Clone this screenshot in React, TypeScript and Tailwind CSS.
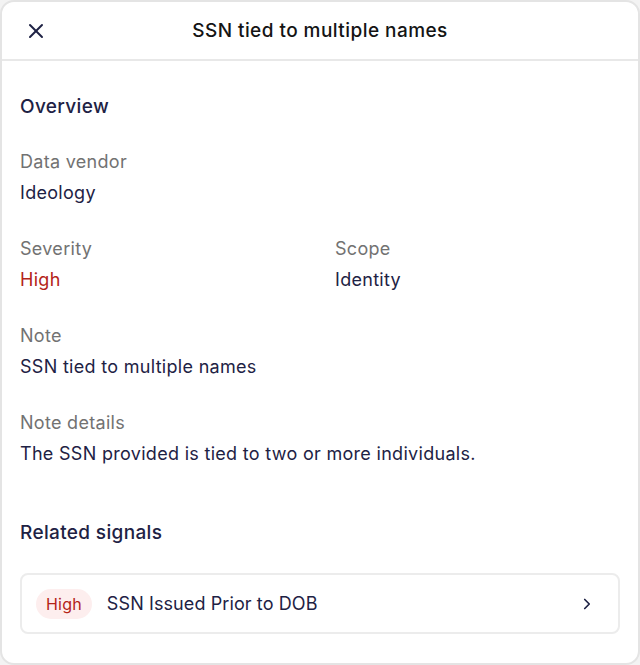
import { X, ChevronRight } from 'lucide-react'

export default function App() {
  return (
    <div className="h-[665px] w-[640px] bg-[#f3f3f3] font-['Inter','Liberation_Sans',sans-serif]">
      <div className="flex h-full flex-col overflow-hidden rounded-[14px] border-2 border-[#e4e4e4] bg-white">
        <div className="relative flex h-[59px] shrink-0 items-center justify-center border-b-2 border-[#e8e8e8]">
          <button className="absolute left-[22px] top-1/2 -translate-y-1/2 text-[#1e2244]">
            <X size={24} strokeWidth={2} />
          </button>
          <h1 className="pt-[2px] text-[19px] font-medium tracking-[0.45px] text-[#141414]">SSN tied to multiple names</h1>
        </div>

        <div className="flex flex-col px-[18px] pt-[33px]">
          <h2 className="text-[19px] font-medium leading-[26px] tracking-[0.35px] text-[#1e2244]">Overview</h2>

          <div className="mt-[29px] flex flex-col gap-[30px]">
            <Field label="Data vendor" value="Ideology" />
            <div className="grid grid-cols-[315px_1fr]">
              <Field label="Severity" value="High" red />
              <Field label="Scope" value="Identity" />
            </div>
            <Field label="Note" value="SSN tied to multiple names" />
            <Field label="Note details" value="The SSN provided is tied to two or more individuals." />
          </div>

          <h2 className="mt-[53px] text-[19px] font-medium leading-[26px] tracking-[0.35px] text-[#1e2244]">Related signals</h2>

          <div className="mt-[27px] flex h-[61px] items-center rounded-[8px] border-2 border-[#ececec] pl-[14px] pr-[22px]">
            <span className="flex h-[30px] items-center rounded-full bg-[#fdeeee] px-[10px] text-[16px] tracking-[0.2px] text-[#b42318]">High</span>
            <span className="ml-[15px] flex-1 text-[18px] tracking-[0.1px] text-[#1e2244]">SSN Issued Prior to DOB</span>
            <ChevronRight size={18} strokeWidth={2.25} className="text-[#1e2244]" />
          </div>
        </div>
      </div>
    </div>
  )
}

function Field({ label, value, red }: { label: string; value: string; red?: boolean }) {
  return (
    <div className="flex flex-col tracking-[0.3px]">
      <span className="text-[18px] leading-[26px] text-[#727272]">{label}</span>
      <span className={`mt-[5px] text-[18px] leading-[26px] ${red ? 'text-[#b42318]' : 'text-[#1e2244]'}`}>{value}</span>
    </div>
  )
}
